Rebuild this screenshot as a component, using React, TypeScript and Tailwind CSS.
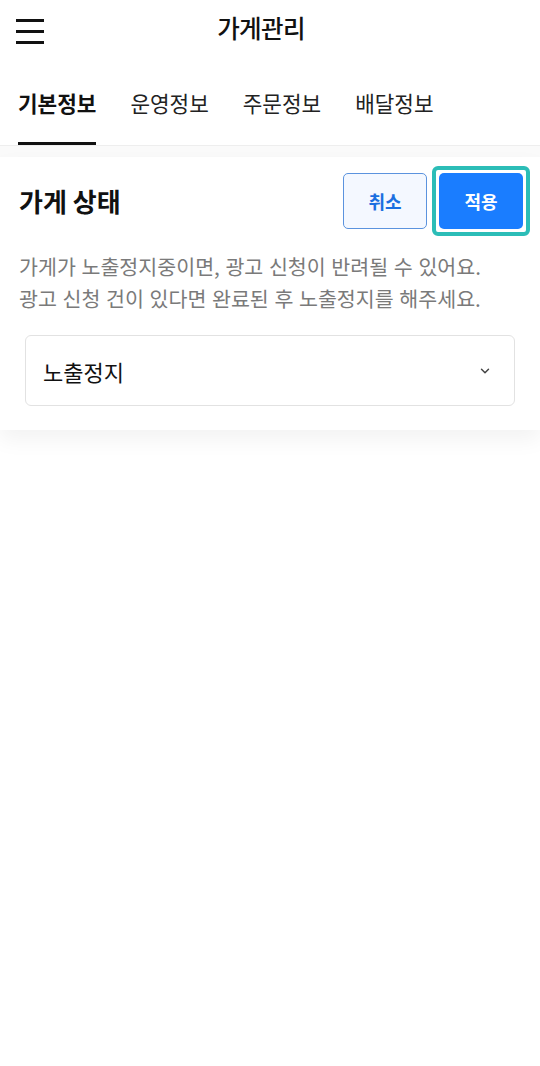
import { ChevronDown } from 'lucide-react';

export default function App() {
  const tabs = ['기본정보', '운영정보', '주문정보', '배달정보'];

  return (
    <div
      className="min-h-[1066px] w-[540px] bg-white text-[#111]"
      style={{ fontFamily: '"Noto Sans CJK KR", "Noto Sans", sans-serif' }}
    >
      {/* Header */}
      <header className="relative flex h-[60px] items-start justify-center pr-[18px] pt-[14px]">
        <button className="absolute left-[16px] top-[19px] flex w-[28px] flex-col gap-[8px]">
          <span className="block h-[3px] w-full bg-[#111]" />
          <span className="block h-[3px] w-full bg-[#111]" />
          <span className="block h-[3px] w-full bg-[#111]" />
        </button>
        <h1 className="text-[24.5px] font-medium leading-[28px] tracking-tight">가게관리</h1>
      </header>

      {/* Tabs */}
      <nav className="flex h-[86px] items-end gap-[34px] border-b border-[#eeeeee] px-[18px]">
        {tabs.map((tab, idx) => (
          <div
            key={tab}
            className={`flex h-full flex-col justify-center border-b-[3px] pt-[3px] text-[21.3px] leading-none ${
              idx === 0 ? 'border-[#111] font-bold' : 'border-transparent font-normal text-[#222]'
            }`}
          >
            {tab}
          </div>
        ))}
      </nav>

      <div className="h-[11px] bg-[#fafafa]" />

      {/* Card */}
      <section className="relative bg-white pb-[24px] pl-[19px] pr-[10px] pt-[9px] shadow-[0_10px_20px_rgba(0,0,0,0.05)]">
        <div className="flex items-center justify-between">
          <h2 className="text-[26px] font-bold leading-none">가게 상태</h2>
          <div className="flex items-center gap-[5px]">
            <button className="h-[56px] w-[84px] rounded-[5px] border border-[#5b93de] bg-[#f4f8ff] text-[18px] font-bold text-[#1a6fe0]">
              취소
            </button>
            <div className="rounded-[6px] border-[4px] border-[#2cbdb7] p-[3px]">
              <button className="block h-[56px] w-[84px] rounded-[5px] bg-[#1a7dff] text-[18px] font-bold text-white">
                적용
              </button>
            </div>
          </div>
        </div>

        <p className="mt-[14px] pr-[9px] text-[20.6px] leading-[32px] tracking-normal text-[#7a7a7a] [word-spacing:1px]">
          가게가 노출정지중이면, 광고 신청이 반려될 수 있어요.
          <br />
          광고 신청 건이 있다면 완료된 후 노출정지를 해주세요.
        </p>

        <div className="ml-[6px] mr-[15px] mt-[21px] flex h-[71px] items-center justify-between rounded-[6px] border border-[#e2e2e2] pl-[17px] pr-[22px]">
          <span className="text-[22px] leading-none text-[#111]">노출정지</span>
          <ChevronDown className="h-[14px] w-[14px] text-[#444]" strokeWidth={2.5} />
        </div>
      </section>
    </div>
  );
}
